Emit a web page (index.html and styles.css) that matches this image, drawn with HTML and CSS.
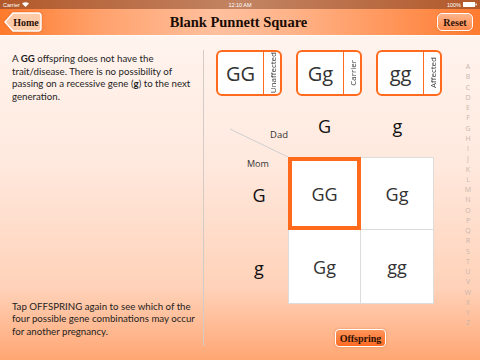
FILE: index.html
```html
<!DOCTYPE html>
<html lang="en">
<head>
  <meta charset="UTF-8">
  <meta name="viewport" content="width=device-width, initial-scale=1.0">
  <title>Blank Punnett Square</title>
  <link rel="stylesheet" href="styles.css">
</head>
<body>
  <div class="status-bar">
    <span class="carrier">Carrier
      <svg width="7" height="5" viewBox="0 0 7 5"><path d="M0 1.6 A5 5 0 0 1 7 1.6 L3.5 5 Z" fill="#fff"/></svg>
    </span>
    <span class="clock">12:10 AM</span>
    <span class="battery">100%
      <svg width="14" height="5" viewBox="0 0 14 5"><rect x="0" y="0" width="12" height="5" fill="#fff"/><rect x="12.5" y="1.5" width="1.2" height="2" fill="#fff"/></svg>
    </span>
  </div>

  <header class="navbar">
    <a href="#" class="btn-home">
      <svg class="btn-home-shape" width="38" height="20" viewBox="0 0 38 20">
        <path d="M9 1 H34 Q37 1 37 4 V16 Q37 19 34 19 H9 L1 10 Z" fill="#ffcaa8" stroke="#fff" stroke-width="1.5" stroke-linejoin="round"/>
      </svg>
      <span>Home</span>
    </a>
    <h1>Blank Punnett Square</h1>
    <a href="#" class="btn-reset">Reset</a>
  </header>

  <main class="main">
    <section class="info">
      <p>A <b>GG</b> offspring does not have the trait/disease. There is no possibility of passing on a recessive gene (<b>g</b>) to the next generation.</p>
      <p>Tap OFFSPRING again to see which of the four possible gene combinations may occur for another pregnancy.</p>
    </section>

    <section class="board">
      <div class="cards">
        <div class="card">
          <div class="card-main">GG</div>
          <div class="card-side"><span>Unaffected</span></div>
        </div>
        <div class="card">
          <div class="card-main">Gg</div>
          <div class="card-side"><span>Carrier</span></div>
        </div>
        <div class="card">
          <div class="card-main">gg</div>
          <div class="card-side"><span>Affected</span></div>
        </div>
      </div>

      <div class="punnett">
        <div class="corner">
          <svg width="58" height="47" viewBox="0 0 58 47"><line x1="0" y1="19" x2="58" y2="47" stroke="#cfcfcf" stroke-width="1"/></svg>
          <span class="dad">Dad</span>
        </div>
        <div class="col-head">G</div>
        <div class="col-head">g</div>

        <div class="row-head"><span class="mom">Mom</span>G</div>
        <div class="cell top left selected">GG</div>
        <div class="cell top">Gg</div>

        <div class="row-head">g</div>
        <div class="cell left">Gg</div>
        <div class="cell">gg</div>
      </div>

      <div class="actions">
        <a href="#" class="btn-offspring">Offspring</a>
      </div>
    </section>

    <nav class="index">
      <span>A</span><span>B</span><span>C</span><span>D</span><span>E</span><span>F</span><span>G</span>
      <span>H</span><span>I</span><span>J</span><span>K</span><span>L</span><span>M</span><span>N</span>
      <span>O</span><span>P</span><span>Q</span><span>R</span><span>S</span><span>T</span><span>U</span>
      <span>V</span><span>W</span><span>X</span><span>Y</span><span>Z</span>
    </nav>
  </main>
</body>
</html>
```

FILE: styles.css
```css
:root {
  --orange: #ff6a1c;
  --text: #2b2b2b;
  --grid-line: #dcdcdc;
}

* {
  margin: 0;
  padding: 0;
  box-sizing: border-box;
}

body {
  width: 480px;
  height: 360px;
  overflow: hidden;
  font-family: "Open Sans", "Noto Sans", sans-serif;
  color: var(--text);
  background: linear-gradient(to bottom, #fff7f3 0%, #ffe9de 45%, #ffd2b9 80%, #ffa673 100%);
}

/* status bar */
.status-bar {
  height: 9px;
  display: grid;
  grid-template-columns: 1fr auto 1fr;
  align-items: center;
  padding: 0 3px;
  font-family: "Liberation Sans", sans-serif;
  font-size: 5.5px;
  color: #fff;
  background: linear-gradient(to right, #b2582a, #c28463 50%, #b2582a);
}

.carrier {
  display: flex;
  align-items: center;
  gap: 2px;
}

.battery {
  display: flex;
  align-items: center;
  justify-content: flex-end;
  gap: 2px;
}

/* nav bar */
.navbar {
  height: 26px;
  display: grid;
  grid-template-columns: 1fr auto 1fr;
  align-items: center;
  padding: 0 7px 0 4px;
  background: linear-gradient(to right, #ff7a2c 0%, #ffa06a 20%, #ffc09e 45%, #ffb48a 60%, #ff7b30 100%);
  box-shadow: 0 1px 0 rgba(255, 255, 255, 0.6);
}

.navbar h1 {
  font-family: "Liberation Serif", serif;
  font-size: 14.5px;
  font-weight: bold;
  color: #1a0c04;
  text-align: center;
}

.btn-home {
  position: relative;
  width: 38px;
  height: 20px;
  display: flex;
  align-items: center;
  justify-content: center;
  padding-left: 6px;
  font-family: "Liberation Serif", serif;
  font-size: 10px;
  font-weight: bold;
  color: #2a1206;
  text-decoration: none;
}

.btn-home-shape {
  position: absolute;
  left: 0;
  top: 0;
  filter: drop-shadow(0 0 1px rgba(200, 80, 20, 0.6));
}

.btn-home span {
  position: relative;
}

.btn-reset {
  justify-self: end;
  width: 36px;
  height: 18px;
  display: flex;
  align-items: center;
  justify-content: center;
  border: 1.5px solid #fff;
  border-radius: 5px;
  background: linear-gradient(to bottom, #ffb48a, #ff8a4c);
  box-shadow: 0 0 1px rgba(200, 80, 20, 0.7);
  font-family: "Liberation Serif", serif;
  font-size: 10px;
  font-weight: bold;
  color: #2a1206;
  text-decoration: none;
}

/* main */
.main {
  height: 325px;
  display: flex;
}

.info {
  width: 204px;
  margin: 15px 0 14px;
  padding: 2px 2px 9px 12px;
  border-right: 1px solid #d4cbc6;
  display: flex;
  flex-direction: column;
  justify-content: space-between;
  font-family: "Lato", "Open Sans", sans-serif;
  font-size: 9.7px;
  line-height: 12.5px;
  color: #1e1e1e;
}

.info b {
  font-weight: 700;
}

.board {
  flex: 1;
  display: flex;
  flex-direction: column;
}

.cards {
  display: flex;
  gap: 14px;
  margin: 15px 0 0 12px;
}

.card {
  width: 66px;
  height: 46px;
  display: flex;
  border: 2px solid var(--orange);
  border-radius: 6px;
  background: #fff;
}

.card-main {
  flex: 1;
  display: flex;
  align-items: center;
  justify-content: center;
  font-size: 20px;
  color: #333;
}

.card-side {
  width: 17px;
  border-left: 1.5px solid var(--orange);
  display: flex;
  align-items: center;
  justify-content: center;
}

.card-side span {
  writing-mode: vertical-rl;
  transform: rotate(180deg);
  font-size: 8px;
  color: #333;
  white-space: nowrap;
}

/* punnett square */
.punnett {
  display: grid;
  grid-template-columns: 58px 73px 73px;
  grid-template-rows: 47px 73px 74px;
  margin: 14px 0 0 26px;
}

.corner {
  position: relative;
}

.dad {
  position: absolute;
  right: 0;
  top: 18px;
  font-size: 9.5px;
  color: #333;
}

.col-head {
  display: flex;
  justify-content: center;
  padding-top: 4px;
  font-size: 18px;
  color: #111;
}

.row-head {
  position: relative;
  display: flex;
  align-items: center;
  justify-content: center;
  padding-top: 2px;
  font-size: 18px;
  color: #111;
}

.mom {
  position: absolute;
  left: 17px;
  top: 0;
  font-size: 9px;
  color: #333;
}

.cell {
  display: flex;
  align-items: center;
  justify-content: center;
  background: #fff;
  border-right: 1px solid var(--grid-line);
  border-bottom: 1px solid var(--grid-line);
  font-size: 18px;
  color: #333;
}

.cell.top {
  border-top: 1px solid var(--grid-line);
}

.cell.left {
  border-left: 1px solid var(--grid-line);
}

.cell.top.selected {
  border: 4px solid var(--orange);
}

.actions {
  margin: 25px 0 0 131px;
}

.btn-offspring {
  width: 51px;
  height: 18px;
  display: flex;
  align-items: center;
  justify-content: center;
  border: 1.5px solid #fff;
  border-radius: 4px;
  background: linear-gradient(to bottom, #ff955a, #ff6a22);
  box-shadow: 0 0 2px rgba(200, 80, 20, 0.5);
  font-family: "Liberation Serif", serif;
  font-size: 10px;
  font-weight: bold;
  color: #2a1206;
  text-decoration: none;
}

/* side index */
.index {
  width: 24px;
  padding: 27px 0 0;
  display: flex;
  flex-direction: column;
  align-items: center;
  font-size: 7px;
  line-height: 10.25px;
  color: #c9b5ac;
}
```
